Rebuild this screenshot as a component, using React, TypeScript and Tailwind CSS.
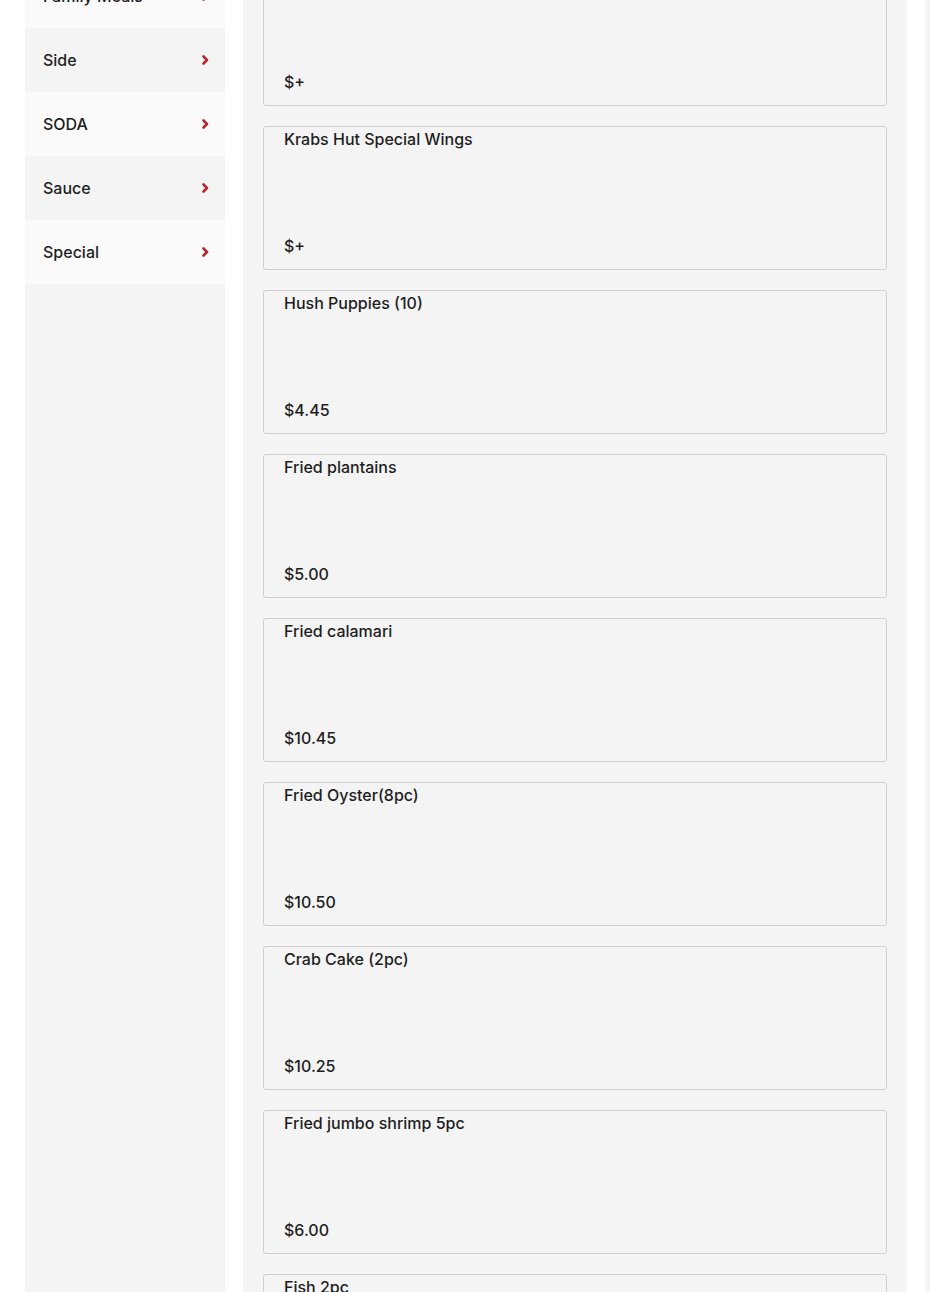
const categories = ["Family Meals", "Side", "SODA", "Sauce", "Special"];

const items = [
  { name: "", price: "$+" },
  { name: "Krabs Hut Special Wings", price: "$+" },
  { name: "Hush Puppies (10)", price: "$4.45" },
  { name: "Fried plantains", price: "$5.00" },
  { name: "Fried calamari", price: "$10.45" },
  { name: "Fried Oyster(8pc)", price: "$10.50" },
  { name: "Crab Cake (2pc)", price: "$10.25" },
  { name: "Fried jumbo shrimp 5pc", price: "$6.00" },
  { name: "Fish 2pc", price: "" },
];

function Chevron() {
  return (
    <svg width="8" height="12" viewBox="0 0 8 12" className="text-[#b3282d]">
      <path d="M2.5 2.5l3.5 3.5-3.5 3.5" fill="none" stroke="currentColor" strokeWidth="2.6" strokeLinecap="round" strokeLinejoin="round" />
    </svg>
  );
}

export default function App() {
  return (
    <div
      className="h-[1292px] overflow-hidden bg-white text-[#1e1e1e]"
      style={{ fontFamily: "Inter, 'Noto Sans', sans-serif" }}
    >
      <div className="-mt-[58px] flex">
        <aside className="ml-[25px] w-[200px] shrink-0 bg-[#f4f4f4] pt-[22px] min-h-[1400px]">
          {categories.map((c, i) => (
            <div
              key={c}
              className={`flex h-16 items-center justify-between pl-[18px] pr-[16px] text-[16px] font-medium ${
                i % 2 === 0 ? "bg-[#fafafa]" : "bg-[#f4f4f4]"
              }`}
            >
              <span>{c}</span>
              <Chevron />
            </div>
          ))}
        </aside>
        <main className="ml-[18px] w-[664px] shrink-0 bg-[#f4f4f4] px-5 pt-5 flex flex-col gap-5 min-h-[1400px]">
          {items.map((it, i) => (
            <div
              key={i}
              className="flex h-[144px] flex-col justify-between rounded-[3px] border border-[#cfcfcf] bg-[#f4f4f4] px-5 pb-[11px] text-[16px] font-medium leading-6"
            >
              <div>{it.name}</div>
              <div>{it.price}</div>
            </div>
          ))}
        </main>
        <div className="ml-[18px] w-[5px] shrink-0 bg-[#f4f4f4] min-h-[1400px]" />
      </div>
    </div>
  );
}
